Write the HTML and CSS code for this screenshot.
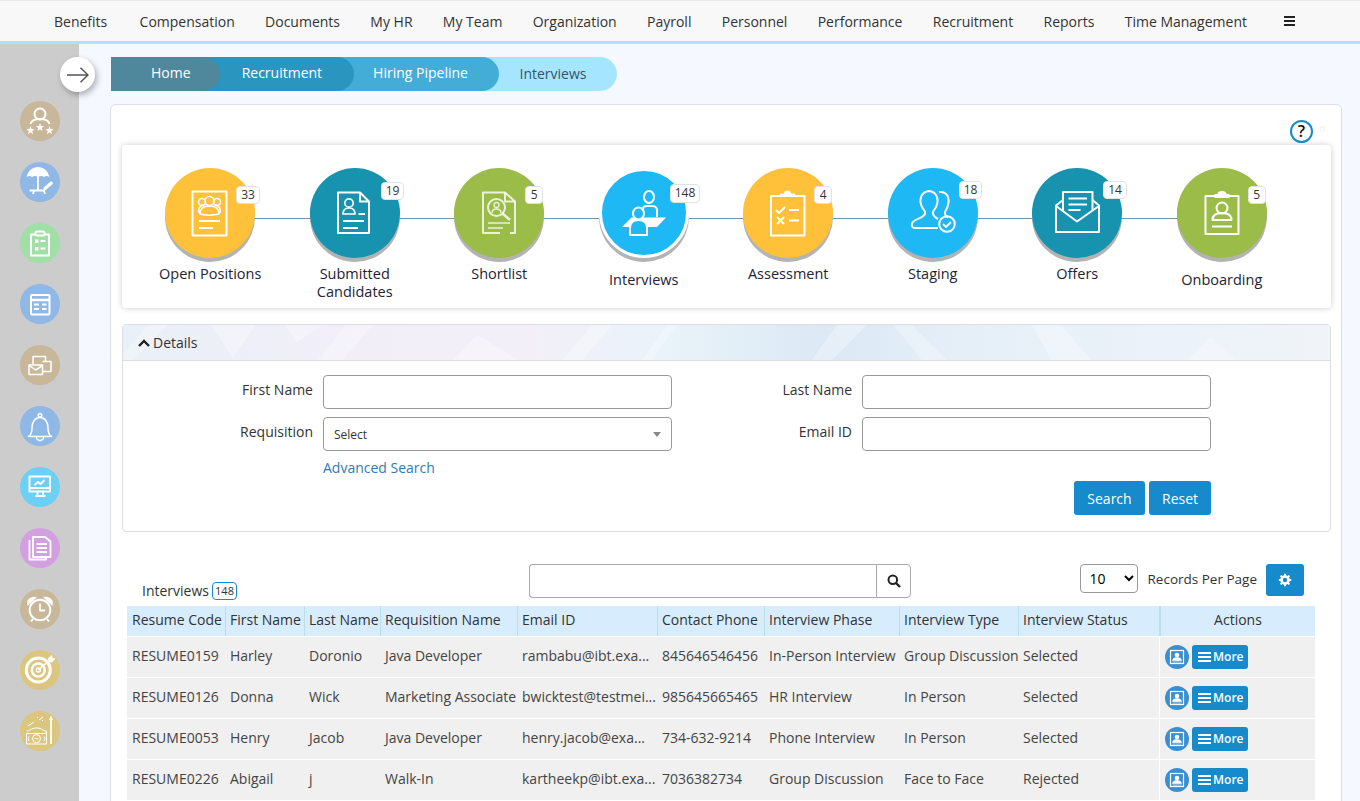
FILE: index.html
```html
<!DOCTYPE html>
<html lang="en">
<head>
<meta charset="utf-8">
<title>Interviews</title>
<link rel="stylesheet" href="styles.css">
</head>
<body>
<header class="topbar">
  <nav class="topnav">
    <a class="nav-first">Benefits</a><a>Compensation</a><a>Documents</a><a>My HR</a><a>My Team</a><a>Organization</a><a>Payroll</a><a>Personnel</a><a>Performance</a><a>Recruitment</a><a>Reports</a><a>Time Management</a>
    <span class="burger"><i></i><i></i><i></i></span>
  </nav>
</header>
<div class="layout">
  <aside class="sidebar">
    <button class="toggle" aria-label="Toggle"><svg width="22" height="16" viewBox="0 0 22 16"><path d="M0 8H21M13.500 .8L21 8l-7.500 7.200" fill="none" stroke="#555" stroke-width="1.500"/></svg></button>
    <span class="side-ic tan"><svg viewBox="0 0 40 40" class="ic"><circle cx="20" cy="13" r="5.500"/><path d="M10.500 23c1-4 5-5 9.500-5s8.500 1 9.500 5"/><path class="solid" d="M10.500 25l1.050 3.050 3.250.05-2.600 1.950.95 3.100-2.650-1.850-2.650 1.850.95-3.100-2.600-1.950 3.250-.05zM20 22l1.050 3.050 3.250.05-2.600 1.950.95 3.100-2.650-1.850-2.650 1.850.95-3.100-2.600-1.950 3.250-.05zM29.500 25l1.050 3.050 3.250.05-2.600 1.950.95 3.100-2.650-1.850-2.650 1.850.95-3.100-2.600-1.950 3.250-.05z"/></svg></span>
    <span class="side-ic blue"><svg viewBox="0 0 40 40" class="ic"><path class="solid" d="M6.500 15C8 8.500 13 5 18 5s10 3.500 11.500 10c-2-1.500-3.500-1.500-5.500 0-2-1.500-4-1.500-6 0-2-1.500-4-1.500-6 0-2-1.500-3.500-1.500-5.500 0z"/><path d="M18 14v14M9.500 28.500H23.500L32.500 21M13 32l1-3M25 32l-1-3" stroke-width="1.800"/><path d="M24 27l8-7" stroke-width="2.500"/></svg></span>
    <span class="side-ic green"><svg viewBox="0 0 40 40" class="ic"><path d="M16 11.500h-5v21h18v-21h-5"/><rect x="15.500" y="8.500" width="9" height="4" rx="1.500"/><path class="solid thin" d="M15 16.500h3.500v3.500H15zM15 24h3.500v3.500H15z"/><path d="M20.500 18h5M20.500 25.500h5"/></svg></span>
    <span class="side-ic blue"><svg viewBox="0 0 40 40" class="ic"><rect x="11" y="11" width="18.500" height="19.500" rx="1"/><path d="M11 16h18.500" stroke-width="2.500"/><path d="M14 20.500h5M22 20.500h4.500M14 25h5M22 25h4.500" stroke-width="2.200"/></svg></span>
    <span class="side-ic tan"><svg viewBox="0 0 40 40" class="ic ic-thin"><path d="M13 19v-7.500h12.500v5"/><path d="M22.500 16.500h8.500v10h-8.500"/><rect x="9" y="20" width="13.500" height="9.500"/><path d="M9 20.500l6.700 4.500 6.800-4.500"/></svg></span>
    <span class="side-ic blue"><svg viewBox="0 0 40 40" class="ic ic-thin"><path d="M8.500 30.500c2.500-1.500 3.500-4 3.500-8.500 0-6 3-10.500 8-10.500s8 4.500 8 10.500c0 4.500 1 7 3.500 8.500z"/><circle cx="20" cy="9.300" r="1.800"/><path d="M16.500 31c0 4.500 7 4.500 7 0"/></svg></span>
    <span class="side-ic sky"><svg viewBox="0 0 40 40" class="ic"><rect x="9.500" y="9.500" width="20.500" height="15"/><path d="M9.500 21h20.500M17.500 25v3.500M23 25v3.500M15.500 29h10" stroke-width="1.800"/><path d="M14.500 18l3.500-3 2.500 2 4-4" stroke-width="1.800"/></svg></span>
    <span class="side-ic purple"><svg viewBox="0 0 40 40" class="ic ic-thin"><path d="M13 9h12l5.500 4.500V29H13z" stroke-width="1.800"/><path d="M9.500 12v19.500H26v-2.500" stroke-width="1.800"/><path d="M16.500 16h10.500M16.500 20h10.500M16.500 24h10.500" stroke-width="1.800"/></svg></span>
    <span class="side-ic tan"><svg viewBox="0 0 40 40" class="ic"><circle cx="20" cy="21" r="10.300"/><path d="M20 14.500v7h5" stroke-width="1.800"/><path class="solid" d="M7.500 17C5.500 10 11 6.500 17 8zM32.500 17C34.500 10 29 6.500 23 8z"/><path d="M13 30l-2 2.500M27 30l2 2.500"/></svg></span>
    <span class="side-ic gold"><svg viewBox="0 0 40 40" class="ic"><circle cx="18.300" cy="20" r="12" stroke-width="3"/><circle cx="18.300" cy="20" r="6.500" stroke-width="2.500"/><circle cx="18.300" cy="20" r="2" stroke-width="1.500"/><path d="M18.300 20L31 9" stroke-width="1.500"/><path class="solid thin" d="M28 8l4-3 .5 3 3 .5-3.500 4-3.500-.5z"/></svg></span>
    <span class="side-ic gold"><svg viewBox="0 0 40 40" class="ic ic-hair"><rect x="6.500" y="22.500" width="20" height="10.500"/><ellipse cx="16.500" cy="27.700" rx="4" ry="4"/><path d="M14.500 27.700h4M9 25.500l-1 2 1 2.500M24 25.500l1 2-1 2.500"/><path d="M6.500 20c4 0 4-3 10-3s6 3 10 3v2.500M8 15l6-4M19 9l4-3M17 6l1 1M22 9l1 1"/><path d="M31 33V7" stroke-width="1.800"/><path class="solid thin" d="M31 4.500l-2 4.500h4z"/></svg></span>
  </aside>
  <main class="main">
    <ol class="crumbs">
      <li class="crumb c1">Home</li>
      <li class="crumb c2">Recruitment</li>
      <li class="crumb c3">Hiring Pipeline</li>
      <li class="crumb c4">Interviews</li>
    </ol>
    <section class="card">
      <div class="help-row">
        <span class="help">?</span>
        <span class="dot"></span>
      </div>
      <div class="pipeline">
        <div class="stages">
          <div class="stage">
            <div class="circle amber">
              <svg viewBox="0 0 90 90" class="ic"><rect x="27.500" y="23.500" width="34" height="44"/><circle cx="37" cy="34" r="3.500" stroke-width="1.500"/><circle cx="52" cy="34" r="3.500" stroke-width="1.500"/><circle cx="44.500" cy="33" r="4.500" stroke-width="1.500"/><path d="M34 45c-1-5 1-7 4-8M55 45c1-5-1-7-4-8M35 46c0-5 3-8 9.500-8s9.500 3 9.500 8c-5 1.500-14 1.500-19 0z" stroke-width="1.500"/><path d="M34 53h21M34 60h14" stroke-width="1.800"/></svg>
              <span class="badge">33</span>
            </div>
            <div class="label">Open Positions</div>
          </div>
          <div class="stage">
            <div class="circle teal">
              <svg viewBox="0 0 90 90" class="ic"><path d="M28 24.500h22l9 9V65H28zM50 24.500v9h9"/><circle cx="39" cy="35" r="4.200" stroke-width="1.700"/><path d="M33 46c0-4 2.500-6 6-6s6 2 6 6z" stroke-width="1.700"/><path d="M48.500 46h6.500M33 53h21M33 60h15" stroke-width="1.800"/></svg>
              <span class="badge badge-hi">19</span>
            </div>
            <div class="label">Submitted<br>Candidates</div>
          </div>
          <div class="stage">
            <div class="circle olive">
              <svg viewBox="0 0 90 90" class="ic ic-soft"><path d="M46 65H29V24.500h22l10 9V65h-5"/><path d="M51 24.500v9h10"/><circle cx="42.500" cy="39.500" r="8.500"/><circle cx="42.500" cy="37" r="2.500" stroke-width="1.300"/><path d="M38 45c0-3 2-4 4.500-4s4.500 1 4.500 4" stroke-width="1.300"/><path d="M48.500 45.500L56 52" stroke-width="2.500"/><path d="M34 55h22M34 60h15" stroke-width="1.700"/></svg>
              <span class="badge">5</span>
            </div>
            <div class="label">Shortlist</div>
          </div>
          <div class="stage">
            <div class="circle sky-fill active">
              <svg viewBox="0 0 84 84" class="ic"><ellipse cx="47" cy="26" rx="5" ry="6"/><path d="M41 46V38c0-2 2-3 4-3h5c3 0 5 2 5 4v7"/><path class="solid" d="M20 56l9.500-9.500H64l-9 9.500z"/><ellipse class="holed" cx="36.500" cy="42.500" rx="5.500" ry="6"/><path class="holed" d="M28 64V57c0-5 3-8 8.500-8s8.500 3 8.500 8v7z"/></svg>
              <span class="badge badge-active">148</span>
            </div>
            <div class="label label-low">Interviews</div>
          </div>
          <div class="stage">
            <div class="circle amber">
              <svg viewBox="0 0 90 90" class="ic"><rect x="28" y="28" width="33.500" height="39.500"/><path class="solid" d="M37 28.500v-3h4c0-2 1.500-3 3.500-3s3.500 1 3.500 3h4v3z"/><path d="M33 42l3 3 6-6M46 42h10M34 49l7 7M41 49l-7 7M46 52.500h10" stroke-width="2"/></svg>
              <span class="badge">4</span>
            </div>
            <div class="label">Assessment</div>
          </div>
          <div class="stage">
            <div class="circle sky-fill">
              <svg viewBox="0 0 90 90" class="ic"><path d="M50 60H27c-4 0-4-5-1-7 4-3 9-3 11-7 1-3-1-3-3-7-3-6-2-15 7-16 9 1 10 10 7 16-2 4-4 4-3 7 1 3 3 4 5 5"/><path d="M51 24c8-1 11 6 9 13-1 5-4 6-3 9 .5 2 2 3 3 3.500"/><circle cx="59" cy="56" r="7.800"/><path d="M55 56l3 3 5-5" stroke-width="1.800"/></svg>
              <span class="badge badge-up">18</span>
            </div>
            <div class="label">Staging</div>
          </div>
          <div class="stage">
            <div class="circle teal">
              <svg viewBox="0 0 90 90" class="ic"><path d="M31 43V24h29.500v19"/><path d="M36.500 30.500h18.500M36.500 36.500h18.500M36.500 42h12" stroke-width="1.800"/><path d="M31 32l-7 5.500V64h43V37.500L60.500 32"/><path d="M24 38l21 15.500L67 38"/></svg>
              <span class="badge badge-up">14</span>
            </div>
            <div class="label">Offers</div>
          </div>
          <div class="stage">
            <div class="circle olive">
              <svg viewBox="0 0 90 90" class="ic"><rect x="28.500" y="28" width="33" height="38"/><path class="solid" d="M37.500 30v-4h3c0-2 2-3 4.500-3s4.500 1 4.500 3h3v4z"/><circle cx="45" cy="40" r="5.500"/><path d="M35.500 52c0-5 4-7 9.500-7s9.500 2 9.500 7z"/><path d="M35 58.500h20"/></svg>
              <span class="badge">5</span>
            </div>
            <div class="label label-low">Onboarding</div>
          </div>
        </div>
      </div>

      <div class="panel">
        <div class="panel-head">
          <svg class="panel-art" viewBox="0 0 1209 36" preserveAspectRatio="none" aria-hidden="true">
            <path d="M45 0L10 36H0V30L25 0zM88 0h45l-23 34zM162 0h38l-26 18zM250 0l-30 36h-25l28-36zM355 10l40 26H330zM440 36l30-36h20l-30 36zM520 36l25-36h10l-25 36zM715 0h30l-35 36h-20zM790 0l35 36h-25l-28-36zM940 0l30 36h-40l-20-36zM1090 12l24 24h-48z" fill="#fff" opacity=".3"/>
          </svg>
          <span class="chev"><svg width="12" height="8" viewBox="0 0 12 8"><path d="M1 7l5-5 5 5" fill="none" stroke="#222" stroke-width="2.400"/></svg></span>
          <span class="panel-title">Details</span>
        </div>
        <div class="panel-body">
          <div class="form-grid">
            <label class="f-label">First Name</label>
            <input class="f-input" type="text">
            <label class="f-label">Last Name</label>
            <input class="f-input" type="text">
            <label class="f-label">Requisition</label>
            <div class="f-input f-select"><span>Select</span><i class="caret"></i></div>
            <label class="f-label">Email ID</label>
            <input class="f-input" type="text">
            <span></span>
            <a class="adv">Advanced Search</a>
          </div>
          <div class="form-actions">
            <button class="btn btn-search">Search</button>
            <button class="btn btn-reset">Reset</button>
          </div>
        </div>
      </div>

      <div class="toolbar">
        <div class="tb-title"><span>Interviews</span><span class="tb-count">148</span></div>
        <div class="tb-search">
          <input type="text" class="tb-input">
          <button class="tb-go" aria-label="Search"><svg width="14" height="14" viewBox="0 0 14 14"><circle cx="5.800" cy="5.800" r="4.300" fill="none" stroke="#222" stroke-width="2"/><path d="M9 9l4 4" stroke="#222" stroke-width="2.400"/></svg></button>
        </div>
        <div class="tb-right">
          <select class="tb-select"><option>10</option></select>
          <span class="tb-rpp">Records Per Page</span>
          <button class="tb-gear" aria-label="Settings"><svg width="14" height="14" viewBox="0 0 14 14"><circle cx="7" cy="7" r="3.500" fill="none" stroke="#fff" stroke-width="2.600"/><path d="M7 .8v2.400M7 10.800v2.400M.8 7h2.400M10.800 7h2.400M2.600 2.600l1.700 1.700M9.700 9.700l1.700 1.700M2.600 11.400l1.700-1.700M9.700 4.300l1.700-1.700" stroke="#fff" stroke-width="2"/></svg></button>
        </div>
      </div>

      <table class="grid">
        <colgroup>
          <col class="w1"><col class="w2"><col class="w3"><col class="w4"><col class="w5"><col class="w6"><col class="w7"><col class="w8"><col class="w9"><col class="w10">
        </colgroup>
        <thead>
          <tr><th>Resume Code</th><th>First Name</th><th>Last Name</th><th>Requisition Name</th><th>Email ID</th><th>Contact Phone</th><th>Interview Phase</th><th>Interview Type</th><th>Interview Status</th><th class="th-act">Actions</th></tr>
        </thead>
        <tbody>
          <tr><td>RESUME0159</td><td>Harley</td><td>Doronio</td><td>Java Developer</td><td>rambabu@ibt.exa...</td><td>845646546456</td><td>In-Person Interview</td><td>Group Discussion</td><td>Selected</td><td class="td-act"><span class="acts"><span class="prof"><svg width="16" height="16" viewBox="0 0 16 16"><rect x="1.500" y="1.500" width="13" height="13" fill="none" stroke="#fff" stroke-width="1.200"/><circle cx="8" cy="6" r="2.300" fill="#fff"/><path d="M3.500 11.500c0-2 2-3 4.500-3s4.500 1 4.500 3zM3.500 13h9" fill="#fff" stroke="#fff" stroke-width=".6"/></svg></span><span class="more"><i class="mb"><b></b><b></b><b></b></i>More</span></span></td></tr>
          <tr><td>RESUME0126</td><td>Donna</td><td>Wick</td><td>Marketing Associate</td><td>bwicktest@testmei...</td><td>985645665465</td><td>HR Interview</td><td>In Person</td><td>Selected</td><td class="td-act"><span class="acts"><span class="prof"><svg width="16" height="16" viewBox="0 0 16 16"><rect x="1.500" y="1.500" width="13" height="13" fill="none" stroke="#fff" stroke-width="1.200"/><circle cx="8" cy="6" r="2.300" fill="#fff"/><path d="M3.500 11.500c0-2 2-3 4.500-3s4.500 1 4.500 3zM3.500 13h9" fill="#fff" stroke="#fff" stroke-width=".6"/></svg></span><span class="more"><i class="mb"><b></b><b></b><b></b></i>More</span></span></td></tr>
          <tr><td>RESUME0053</td><td>Henry</td><td>Jacob</td><td>Java Developer</td><td>henry.jacob@exa...</td><td>734-632-9214</td><td>Phone Interview</td><td>In Person</td><td>Selected</td><td class="td-act"><span class="acts"><span class="prof"><svg width="16" height="16" viewBox="0 0 16 16"><rect x="1.500" y="1.500" width="13" height="13" fill="none" stroke="#fff" stroke-width="1.200"/><circle cx="8" cy="6" r="2.300" fill="#fff"/><path d="M3.500 11.500c0-2 2-3 4.500-3s4.500 1 4.500 3zM3.500 13h9" fill="#fff" stroke="#fff" stroke-width=".6"/></svg></span><span class="more"><i class="mb"><b></b><b></b><b></b></i>More</span></span></td></tr>
          <tr><td>RESUME0226</td><td>Abigail</td><td>j</td><td>Walk-In</td><td>kartheekp@ibt.exa...</td><td>7036382734</td><td>Group Discussion</td><td>Face to Face</td><td>Rejected</td><td class="td-act"><span class="acts"><span class="prof"><svg width="16" height="16" viewBox="0 0 16 16"><rect x="1.500" y="1.500" width="13" height="13" fill="none" stroke="#fff" stroke-width="1.200"/><circle cx="8" cy="6" r="2.300" fill="#fff"/><path d="M3.500 11.500c0-2 2-3 4.500-3s4.500 1 4.500 3zM3.500 13h9" fill="#fff" stroke="#fff" stroke-width=".6"/></svg></span><span class="more"><i class="mb"><b></b><b></b><b></b></i>More</span></span></td></tr>
        </tbody>
      </table>
    </section>
  </main>
</div>
</body>
</html>
```
FILE: styles.css
```css
* { box-sizing: border-box; }
html, body { height: 100%; overflow: hidden; }
body { margin: 0; font-family: "Open Sans", sans-serif; font-size: 14px; color: #333; background: #f5f8ff; }

.topbar { height: 44px; background: #f8f8f8; border-top: 1px solid #e7e7e7; border-bottom: 3px solid #a6e5ff; }
.topnav { display: flex; align-items: center; height: 40px; padding-left: 54px; gap: 30.300px; color: #333; }
.nav-first { margin-right: 2px; }
.burger { display: flex; flex-direction: column; gap: 2px; margin-left: 7px; width: 11px; }
.burger i { height: 2px; background: #222; }

.layout { display: flex; height: 757px; }
.sidebar { position: relative; width: 79px; flex: none; background: #ccc; padding: 57px 0 0 20px; display: flex; flex-direction: column; gap: 21px; }
.toggle { position: absolute; left: 60px; top: 13px; width: 35px; height: 35px; border: 0; border-radius: 50%; background: #fff; box-shadow: 2px 3px 6px rgba(0,0,0,.3); padding: 0; display: flex; align-items: center; justify-content: center; }
.side-ic { width: 40px; height: 40px; border-radius: 50%; display: block; flex: none; }
.side-ic svg { display: block; width: 40px; height: 40px; }
.tan { background: #c8b798; }
.blue { background: #8fb8e6; }
.green { background: #a0dfa6; }
.sky { background: #6ccff6; }
.purple { background: #d29fe0; }
.gold { background: #dcc67f; }

.ic { fill: none; stroke: #fff; stroke-width: 2; stroke-linejoin: round; }
.ic-thin { stroke-width: 1.500; }
.ic-hair { stroke-width: 1; }
.ic-soft { stroke: rgba(255,255,255,.8); }
.solid { fill: #fff; stroke: none; }
.thin { stroke: none; }
.holed { fill: #1eb8f5; }

.main { flex: 1; min-width: 0; padding: 13px 18px 0 31px; }
.crumbs { list-style: none; margin: 0 0 13px 1px; padding: 0; display: flex; height: 34px; width: 506px; }
.crumb { height: 34px; line-height: 32px; border-radius: 0 17px 17px 0; color: #fff; margin-left: -17px; }
.crumb:first-child { margin-left: 0; }
.c1 { width: 109px; background: #4f879c; padding-left: 40px; position: relative; z-index: 4; }
.c2 { width: 152px; background: #2a95bf; padding-left: 39px; position: relative; z-index: 3; text-align: left; }
.c3 { width: 163px; background: #44add7; padding-left: 36px; position: relative; z-index: 2; }
.c4 { width: 135px; background: #a6e5ff; padding-left: 37px; color: #33546a; line-height: 34px; }

.card { background: #fff; border: 1px solid #dcdfe6; border-radius: 6px; padding: 0 10px 0 11px; height: 720px; }
.help-row { height: 40px; display: flex; justify-content: flex-end; align-items: flex-start; position: relative; }
.help { position: absolute; right: 18px; top: 15px; width: 23px; height: 23px; border: 2px solid #168acb; border-radius: 50%; color: #111; font-weight: 600; font-size: 16px; line-height: 19px; text-align: center; }
.dot { position: absolute; right: 6px; top: 21px; width: 5px; height: 5px; border: 1px solid #eee; border-radius: 50%; }

.pipeline { background: #fff; height: 163px; border-radius: 4px; box-shadow: 0 0 6px rgba(0,0,0,.2); padding: 23px 0 0 16px; }
.stages { display: flex; position: relative; }
.stages::before { content: ""; position: absolute; left: 72px; width: 1012px; top: 50px; height: 1px; background: #6f97ae; }
.stage { position: relative; width: 144.500px; flex: none; display: flex; flex-direction: column; align-items: center; }
.circle { position: relative; width: 90px; height: 90px; border-radius: 50%; box-shadow: 0 4px 0 #b3b3b3; }
.circle > svg { display: block; width: 100%; height: 100%; }
.amber { background: #ffc03a; }
.teal { background: #1793b0; }
.olive { background: #9bbc48; }
.sky-fill { background: #1eb8f5; }
.active { border: 3px solid #fff; }
.badge { position: absolute; left: 71px; top: 18px; min-width: 18px; height: 18px; padding: 0 4px; background: #fff; border: 1px solid #e2e2e2; border-radius: 4px; font-size: 12px; line-height: 16px; text-align: center; color: #333; }
.badge-hi { top: 14px; }
.badge-up { top: 13px; }
.badge-active { left: 68px; top: 13px; height: 19px; }
.label { margin-top: 7px; font-size: 14.500px; line-height: 18px; text-align: center; color: #1d2438; }
.label-low { margin-top: 13px; }

.panel { margin-top: 16px; height: 208px; border: 1px solid #ddd; border-radius: 4px; background: #fff; }
.panel-head { position: relative; height: 36px; display: flex; align-items: center; padding-left: 15px; gap: 3px; border-bottom: 1px solid #ddd; background: linear-gradient(90deg, #e9f0f7 0%, #f2eef8 20%, #f3eff8 33%, #e9f3f9 45%, #dbe9f5 58%, #e6f0f8 72%, #f0f4f9 100%); overflow: hidden; }
.panel-art { position: absolute; inset: 0; width: 100%; height: 100%; }
.chev { position: relative; display: flex; }
.panel-title { position: relative; color: #333; }
.panel-body { padding: 14px 119px 0 0; }
.form-grid { display: grid; grid-template-columns: 190px 349px 170px 349px; column-gap: 10px; row-gap: 8px; grid-auto-rows: 34px; }
.f-label { text-align: right; line-height: 30px; color: #333; }
.f-input { height: 34px; border: 1px solid #999; border-radius: 4px; background: #fff; font: inherit; padding: 0 10px; }
.f-select { display: flex; align-items: center; justify-content: space-between; font-size: 12px; color: #333; padding-top: 1px; }
.caret { width: 0; height: 0; border: 4px solid transparent; border-top: 5px solid #888; border-bottom: 0; }
.adv { color: #337ab7; line-height: 34px; height: 34px; margin-top: -8px; }
.form-actions { display: flex; justify-content: flex-end; gap: 4px; margin-top: -12px; }
.btn { height: 34px; border: 0; border-radius: 3px; background: #168acb; color: #fff; font: inherit; padding: 0; }
.btn-search { width: 71px; }
.btn-reset { width: 62px; }

.toolbar { display: flex; align-items: flex-start; height: 42px; margin-top: 32px; padding-left: 20px; }
.tb-title { width: 387px; display: flex; align-items: center; gap: 3px; padding-top: 17px; }
.tb-count { height: 18px; width: 25px; border: 1px solid #168acb; border-radius: 4px; font-size: 11px; line-height: 16px; text-align: center; }
.tb-search { display: flex; width: 382px; height: 34px; }
.tb-input { width: 347px; height: 34px; border: 1px solid #aaa; border-radius: 4px 0 0 4px; border-right: 0; }
.tb-go { width: 35px; height: 34px; border: 1px solid #aaa; border-radius: 0 4px 4px 0; background: #fff; padding: 0; display: flex; align-items: center; justify-content: center; }
.tb-right { display: flex; align-items: flex-start; margin-left: auto; padding-right: 27px; }
.tb-select { width: 58px; height: 29px; border: 1px solid #999; border-radius: 4px; background: #fff; font: inherit; padding-left: 5px; margin-right: 10px; }
.tb-rpp { font-size: 13.500px; line-height: 30px; margin-right: 9px; }
.tb-gear { width: 38px; height: 32px; border: 0; border-radius: 3px; background: #168acb; padding: 0; display: flex; align-items: center; justify-content: center; }

.grid { border-collapse: separate; border-spacing: 0; table-layout: fixed; width: 1188px; margin-left: 5px; }
.w1 { width: 98px; } .w2 { width: 79px; } .w3 { width: 76px; } .w4 { width: 137px; } .w5 { width: 140px; }
.w6 { width: 107px; } .w7 { width: 135px; } .w8 { width: 119px; } .w9 { width: 141px; } .w10 { width: 156px; }
.grid th { height: 30px; background: #d7edfd; font-weight: 400; text-align: left; padding: 0 0 4px 4px; color: #333; border-left: 1px solid #b9e0e8; white-space: nowrap; overflow: hidden; }
.grid th:first-child { border-left: 0; padding-left: 5px; }
.grid .th-act { text-align: center; border-left: 2px solid #b9e0e8; padding: 0 0 4px; }
.grid td { background: #f0f0f0; padding: 0 0 4px 5px; color: #444; border-top: 1px solid #fff; white-space: nowrap; overflow: hidden; }
.grid tbody tr td { height: 41px; }
.grid .td-act { border-left: 1px solid #fff; padding: 0 0 1px 5px; }
.acts { display: flex; gap: 3px; align-items: center; }
.prof { width: 24px; height: 24px; border-radius: 50%; background: #3a8fd0; display: flex; align-items: center; justify-content: center; }
.more { width: 56px; height: 24px; border-radius: 3px; background: #168acb; color: #fff; font-size: 12px; font-weight: 600; display: flex; align-items: center; padding-left: 6px; gap: 2px; }
.mb { display: flex; flex-direction: column; gap: 2px; width: 13px; }
.mb b { height: 2px; background: #fff; display: block; }
```
